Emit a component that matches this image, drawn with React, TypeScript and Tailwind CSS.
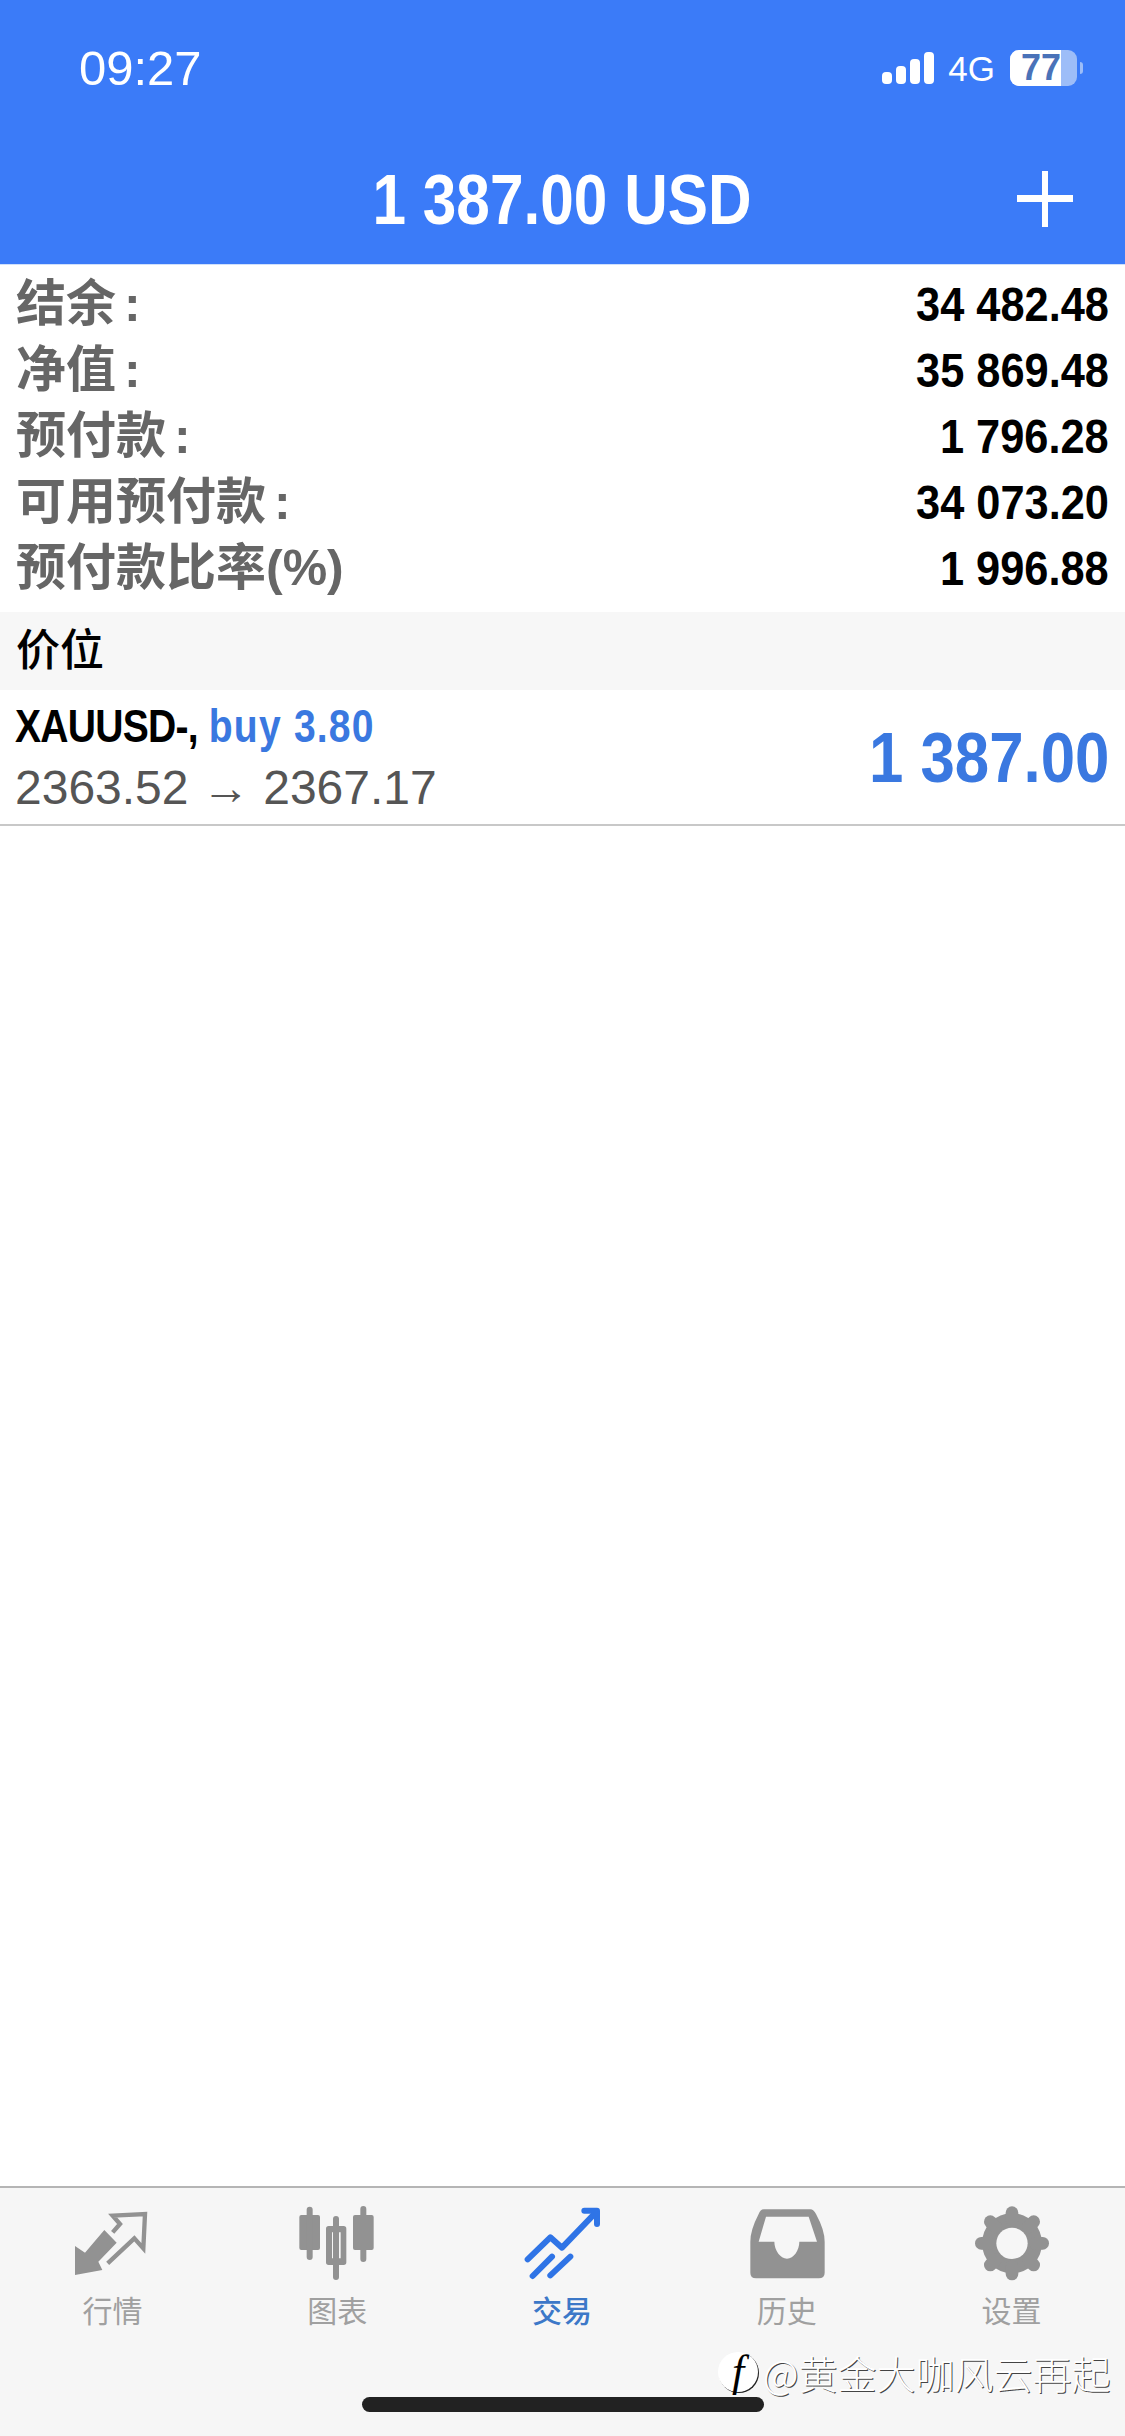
import React from 'react';

const cjk = "font-['Liberation_Sans','Noto_Sans_CJK_SC',sans-serif]";

const summary = [
  { label: '结余', colon: true, value: '34 482.48' },
  { label: '净值', colon: true, value: '35 869.48' },
  { label: '预付款', colon: true, value: '1 796.28' },
  { label: '可用预付款', colon: true, value: '34 073.20' },
  { label: '预付款比率(%)', colon: false, value: '1 996.88' },
];

const QuotesIcon = () => (
  <svg viewBox="6 0 270 270" className="w-[90px] h-[90px]">
    <path d="M118 90 L155 128 L100 185 L112 210 L30 225 L30 138 L60 158 Z" fill="#929292" strokeLinejoin="round" />
    <path d="M143 97 L165 72 L143 47 L240 42 L235 145 L208 115 L128 190" fill="none" stroke="#929292" strokeWidth="13" />
  </svg>
);

const ChartIcon = () => (
  <svg viewBox="0 0 270 270" className="w-[90px] h-[90px]" fill="#929292">
    <rect x="22" y="45" width="62" height="105" rx="6" />
    <rect x="44" y="20" width="18" height="160" rx="9" />
    <rect x="123" y="48" width="18" height="192" rx="9" />
    <path fillRule="evenodd" d="M110 78 H155 Q163 78 163 86 V187 Q163 195 155 195 H110 Q102 195 102 187 V86 Q102 78 110 78 Z M120 97 V175 H146 V97 Z" />
    <rect x="183" y="45" width="62" height="105" rx="6" />
    <rect x="205" y="18" width="18" height="168" rx="9" />
  </svg>
);

const TradeIcon = () => (
  <svg viewBox="0 0 270 270" className="w-[90px] h-[90px]" fill="none" stroke="#2f74e6" strokeWidth="18" strokeLinecap="round" strokeLinejoin="round">
    <path d="M32 178 L100 112 L135 143 L236 38" />
    <path d="M202 32 H240 V72" />
    <path d="M47 228 L105 170" />
    <path d="M100 226 L160 170" />
  </svg>
);

const HistoryIcon = () => (
  <svg viewBox="0 0 270 270" className="w-[90px] h-[90px]" fill="#929292">
    <path
      fillRule="evenodd"
      d="M65 28 H205 Q215 28 222 42 Q248 90 248 125 V218 Q248 235 230 235 H42 Q25 235 25 218 V125 Q25 90 50 42 Q55 28 65 28 Z M72 50 L50 125 H97 C97 150 115 176 135 176 C155 176 172 150 172 125 H225 L200 50 Z"
    />
  </svg>
);

const SettingsIcon = () => (
  <svg viewBox="0 0 270 270" className="w-[90px] h-[90px]">
    <circle cx="135" cy="130" r="90" fill="#929292" />
    {[0, 45, 90, 135, 180, 225, 270, 315].map((deg) => (
      <line key={deg} x1="135" y1="60" x2="135" y2="38" stroke="#929292" strokeWidth="38" strokeLinecap="round" transform={`rotate(${deg} 135 130)`} />
    ))}
    <circle cx="135" cy="130" r="47" fill="#f6f6f6" />
  </svg>
);

const tabs = [
  { label: '行情', icon: <QuotesIcon />, active: false },
  { label: '图表', icon: <ChartIcon />, active: false },
  { label: '交易', icon: <TradeIcon />, active: true },
  { label: '历史', icon: <HistoryIcon />, active: false },
  { label: '设置', icon: <SettingsIcon />, active: false },
];

const StatusBar = () => (
  <div className="h-[136px] flex items-center justify-between pl-[79px] pr-[42px] text-white">
    <span className={`${cjk} text-[49px] leading-none`}>09:27</span>
    <div className="flex items-center">
      <div className="flex items-end gap-[4px] h-[32px]">
        <div className="w-[10px] h-[12px] rounded-[4px] bg-white" />
        <div className="w-[10px] h-[18px] rounded-[4px] bg-white" />
        <div className="w-[10px] h-[25px] rounded-[4px] bg-white" />
        <div className="w-[10px] h-[32px] rounded-[4px] bg-white" />
      </div>
      <span className={`${cjk} text-[35px] leading-none ml-[14px]`}>4G</span>
      <div className="ml-[15px] w-[67px] h-[36px] rounded-[9px] bg-[#9dbdf8]">
        <div className={`${cjk} w-[51px] h-full rounded-l-[9px] bg-white flex items-center justify-end font-bold text-[36px] leading-none text-[#4a72b8]`}>77</div>
      </div>
      <div className="ml-[3px] w-[3px] h-[12px] rounded-r-[3px] bg-[#9dbdf8]" />
    </div>
  </div>
);

const App: React.FC = () => {
  return (
    <div className={`${cjk} relative w-[1125px] min-h-[2436px] flex flex-col bg-white`}>
      <header className="h-[264px] bg-[#3b7bf8]">
        <StatusBar />
        <div className="grid grid-cols-[1fr_auto_1fr] items-center h-[126px] text-white">
          <div />
          <span className="inline-block scale-x-[0.85] font-bold text-[71px] leading-none">1 387.00 USD</span>
          <svg viewBox="0 0 56 56" className="w-[56px] h-[56px] justify-self-end mr-[52px]" fill="white">
            <rect x="25" y="0" width="6" height="56" />
            <rect x="0" y="24" width="56" height="7" />
          </svg>
        </div>
      </header>
      <div className="h-[1px] bg-[#cfe0fb]" />

      <section className="pt-[6px] pb-[11px] px-[16px]">
        {summary.map((row) => (
          <div key={row.label} className="h-[66px] flex items-center justify-between">
            <span className="text-[50px] leading-none font-semibold text-[#666666]">
              {row.label}
              {row.colon && <span className="ml-[8px]">:</span>}
            </span>
            <span className="inline-block origin-right scale-x-[0.885] text-[49px] leading-none font-bold text-black">{row.value}</span>
          </div>
        ))}
      </section>

      <div className="h-[78px] flex items-center px-[16px] bg-[#f7f7f7] text-[44px] leading-none font-medium text-black">价位</div>

      <div className="h-[136px] flex items-center justify-between pl-[15px] pr-[16px] border-b-2 border-[#c8c8c8]">
        <div className="flex flex-col gap-[16px]">
          <div className="origin-left scale-x-[0.85] text-[46px] leading-[46px] font-bold text-black whitespace-nowrap">
            <span className="tracking-[-0.9px]">XAUUSD-,</span> <span className="tracking-[1.4px] text-[#3a78e0]">buy 3.80</span>
          </div>
          <div className="text-[48px] leading-[46px] text-[#555555]">2363.52 → 2367.17</div>
        </div>
        <span className="inline-block origin-right scale-x-[0.87] text-[71px] leading-none font-bold text-[#3a78e0]">1 387.00</span>
      </div>

      <div className="flex-1" />

      <footer className="relative h-[250px] border-t-2 border-[#b5b5b5] bg-[#f6f6f6]">
        <div className="grid grid-cols-5 pt-[12px] pr-[1px]">
          {tabs.map((tab) => (
            <div key={tab.label} className="flex flex-col items-center">
              {tab.icon}
              <span className={`mt-[7px] text-[30px] leading-[30px] ${tab.active ? 'text-[#3c78c8] font-medium' : 'text-[#a0a0a0]'}`}>{tab.label}</span>
            </div>
          ))}
        </div>
        <div className="mx-auto mt-[70px] w-[402px] h-[15px] rounded-full bg-[#222222]" />

        <div className="absolute left-[718px] top-[164px] flex items-center">
          <div className="w-[40px] h-[40px] rounded-full bg-white flex items-center justify-center [box-shadow:1px_1px_0_#222222]">
            <span className="font-['Liberation_Serif',serif] italic text-[44px] leading-none text-black">f</span>
          </div>
          <span className="ml-[5px] text-[39px] leading-none font-['Noto_Sans_CJK_SC',sans-serif] font-light text-white [text-shadow:1px_1px_0_#444444]">@黄金大咖风云再起</span>
        </div>
      </footer>
    </div>
  );
};

export default App;
